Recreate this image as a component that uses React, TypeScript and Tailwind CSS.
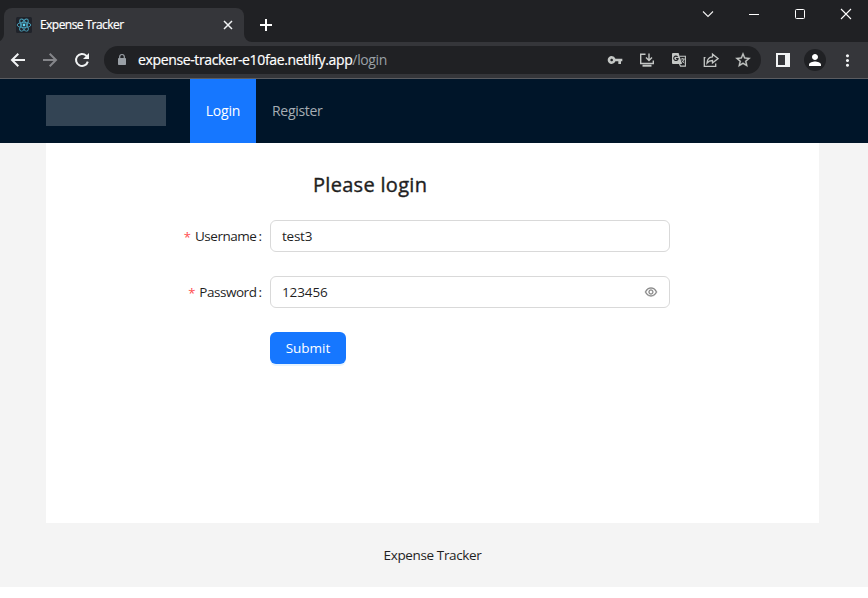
import React from "react";
import { AiOutlineEye } from "react-icons/ai";
import { MdVpnKey, MdStarBorder, MdPerson, MdMoreVert } from "react-icons/md";

function ReactLogo() {
  return (
    <svg width="16" height="16" viewBox="0 0 16 16" className="shrink-0">
      <rect width="16" height="16" rx="1.5" fill="#20232a" />
      <g fill="none" stroke="#4aa3bd" strokeWidth="0.9">
        <ellipse cx="8" cy="8" rx="6.8" ry="2.7" />
        <ellipse cx="8" cy="8" rx="6.8" ry="2.7" transform="rotate(60 8 8)" />
        <ellipse cx="8" cy="8" rx="6.8" ry="2.7" transform="rotate(120 8 8)" />
      </g>
      <circle cx="8" cy="8" r="1.4" fill="#61dafb" />
    </svg>
  );
}

function TitleBar() {
  return (
    <div className="flex h-[42px] bg-[#202124] pl-1 pt-2">
      <div className="relative flex h-[34px] w-[240px] items-center rounded-t-lg bg-[#35363a] pl-3 pr-[11px]">
        <svg className="absolute -left-2 bottom-0" width="8" height="8"><path d="M8 0v8H0A8 8 0 0 0 8 0Z" fill="#35363a" /></svg>
        <svg className="absolute -right-2 bottom-0" width="8" height="8"><path d="M0 0v8h8A8 8 0 0 1 0 0Z" fill="#35363a" /></svg>
        <ReactLogo />
        <span className="ml-2 flex-1 whitespace-nowrap text-[12px] leading-4 tracking-[-0.55px] text-white [-webkit-text-stroke:0.2px]">Expense Tracker</span>
        <svg width="10" height="10" viewBox="0 0 10 10" stroke="#f1f3f4" strokeWidth="1.5"><path d="M1 1l8 8M9 1l-8 8" /></svg>
      </div>
      <svg className="ml-[15px] mt-[10px]" width="14" height="14" viewBox="0 0 14 14" stroke="#fff" strokeWidth="2"><path d="M1 7h12M7 1v12" /></svg>
      <div className="ml-auto flex h-3 items-center gap-[34px] pr-4">
        <svg width="12" height="12" viewBox="0 0 12 12" fill="none" stroke="#f1f1f1" strokeWidth="1.1"><path d="M1 3.5l5 5 5-5" /></svg>
        <svg width="12" height="12" viewBox="0 0 12 12" stroke="#fff"><path d="M1 6.5h10" /></svg>
        <svg width="12" height="12" viewBox="0 0 12 12" fill="none" stroke="#fff"><rect x="1.5" y="1.5" width="9" height="9" rx="1" /></svg>
        <svg width="12" height="12" viewBox="0 0 12 12" stroke="#fff" strokeWidth="1.1"><path d="M1 1l10 10M11 1L1 11" /></svg>
      </div>
    </div>
  );
}

function Toolbar() {
  return (
    <div className="flex h-[37px] items-center border-b border-[#5b5c60] bg-[#35363a] pl-2">
      <div className="flex shrink-0 gap-3">
        <svg width="20" height="20" viewBox="0 0 20 20" fill="none" stroke="#f1f3f4" strokeWidth="2"><path d="M17 10H4.5M10.3 3.7L4 10l6.3 6.3" /></svg>
        <svg width="20" height="20" viewBox="0 0 20 20" fill="none" stroke="#85868a" strokeWidth="2"><path d="M3 10h12.5M9.7 3.7L16 10l-6.3 6.3" /></svg>
        <svg width="20" height="20" viewBox="0 0 20 20" fill="none" stroke="#f1f3f4" strokeWidth="2"><path d="M15.8 11.6A6 6 0 1 1 14.2 5.6L15.3 6.8" /><path d="M17 3v6h-6z" fill="#f1f3f4" stroke="none" /></svg>
      </div>
      <div className="ml-3 flex h-7 w-[657px] items-center rounded-full bg-[#202124] pl-[11px] pr-[10px]">
        <svg width="14" height="14" viewBox="0 0 14 14"><rect x="3" y="5" width="8" height="7" rx="0.8" fill="#9aa0a6" /><path d="M4.7 5.5V3.8a2.3 2.3 0 0 1 4.6 0v1.7" fill="none" stroke="#9aa0a6" strokeWidth="1.2" /></svg>
        <span className="ml-[9px] flex-1 whitespace-nowrap text-[14px] leading-5 tracking-[-0.36px] text-[#9aa0a6]">
          <span className="text-white [-webkit-text-stroke:0.2px]">expense-tracker-e10fae.netlify.app</span>/login
        </span>
        <div className="flex items-center gap-4 text-[#c4c7c5]">
          <MdVpnKey size={16} />
          <svg width="16" height="16" viewBox="0 0 16 16" fill="none" stroke="currentColor" strokeWidth="1.4">
            <path d="M6.5 2.3H1.7v9.2h12.6V8.5" /><path d="M3.5 13.7h9" strokeWidth="2" /><path d="M10 1.5v6.8M7 5.6L10 8.6l3-3" />
          </svg>
          <svg width="16" height="16" viewBox="0 0 16 16" fill="none">
            <path d="M8.5 4.2H14.4v9.9H9.5L8.5 12" stroke="currentColor" strokeWidth="1.1" />
            <path d="M2 1h5.6l3.4 11H2q-1 0-1-1V2q0-1 1-1Z" fill="currentColor" />
            <path d="M6.6 4.9A2.2 2.2 0 1 0 7.1 6.6H5" stroke="#202124" strokeWidth="1.1" />
            <path d="M9.8 7h4M11.7 6v1M13 7q-.5 2.3-2.3 3.7M10.8 8.4l2.4 2.8" stroke="currentColor" strokeWidth="0.9" />
          </svg>
          <svg width="16" height="16" viewBox="0 0 16 16" fill="none" stroke="currentColor" strokeWidth="1.3">
            <path d="M2.5 5.6H1.3v8.8h11.4V11.5" /><path d="M4 11C4.2 7.4 6 5.2 9.5 4.9V2.2L15 6.6 9.5 11V8.5C7 8.5 5.4 9.2 4 11Z" />
          </svg>
          <MdStarBorder size={18} className="-mx-px stroke-[#c4c7c5] [stroke-width:0.4px] [&>path:first-child]:stroke-none" />
        </div>
      </div>
      <svg className="ml-[15px] shrink-0" width="14" height="14" viewBox="0 0 14 14"><path fill="#f1f3f4" fillRule="evenodd" d="M0 0h14v14H0zM2 2v10h7V2z" /></svg>
      <div className="ml-[14px] flex size-[22px] shrink-0 items-center justify-center rounded-full bg-[#202124]"><MdPerson size={18} color="#fff" /></div>
      <MdMoreVert className="ml-3 shrink-0" size={19} color="#f1f3f4" />
    </div>
  );
}

function Field({ label, value, password }: { label: string; value: string; password?: boolean }) {
  return (
    <div className="flex h-8 items-center">
      <div className="flex w-[224px] shrink-0 items-center justify-end pr-2">
        <span className="mr-1 mt-0.5 text-[13px] leading-4 text-[#ff4d4f]">*</span>
        <span className="tracking-[-0.47px]">{label}</span>
        <span className="ml-0.5">:</span>
      </div>
      <div className="flex h-8 w-[400px] items-center justify-between rounded-md border border-[#d9d9d9] bg-white px-[11px]">
        <span className={password ? "tracking-[-0.1px]" : "tracking-[-0.25px]"}>{value}</span>
        {password && <AiOutlineEye size={14} color="#808080" stroke="#808080" strokeWidth={24} className="overflow-visible" />}
      </div>
    </div>
  );
}

export default function App() {
  return (
    <div className="flex h-[598px] w-[868px] flex-col overflow-hidden bg-white font-['Open_Sans','Noto_Sans',sans-serif] text-[13.5px] leading-[22px] text-[#1f1f1f]">
      <TitleBar />
      <Toolbar />
      <header className="flex h-16 shrink-0 items-start bg-[#001529] pl-[46px]">
        <div className="mr-6 mt-4 h-[31px] w-[120px] bg-[#334454]" />
        <nav className="flex h-16 text-[14px]">
          <a className="flex w-[66px] items-center justify-center bg-[#1677ff] text-white"><span className="tracking-[-0.2px]">Login</span></a>
          <a className="flex items-center pl-4 text-[#a6adb4]"><span className="tracking-[-0.3px]">Register</span></a>
        </nav>
      </header>
      <div className="h-[444px] shrink-0 bg-[#f4f4f4]">
        <main className="ml-[46px] h-[380px] w-[773px] bg-white pt-[26px]">
          <h1 className="mb-[19px] ml-[267px] text-[20px] font-medium leading-8 tracking-[0.3px] [-webkit-text-stroke:0.4px]">Please login</h1>
          <div className="flex flex-col gap-6">
            <Field label="Username" value="test3" />
            <Field label="Password" value="123456" password />
            <button className="ml-[224px] h-8 w-[76px] rounded-md bg-[#1677ff] text-white shadow-[0_2px_0_rgba(5,145,255,0.1)]">Submit</button>
          </div>
        </main>
        <footer className="flex h-16 items-center justify-center pr-[3px] tracking-[-0.36px]">Expense Tracker</footer>
      </div>
    </div>
  );
}
